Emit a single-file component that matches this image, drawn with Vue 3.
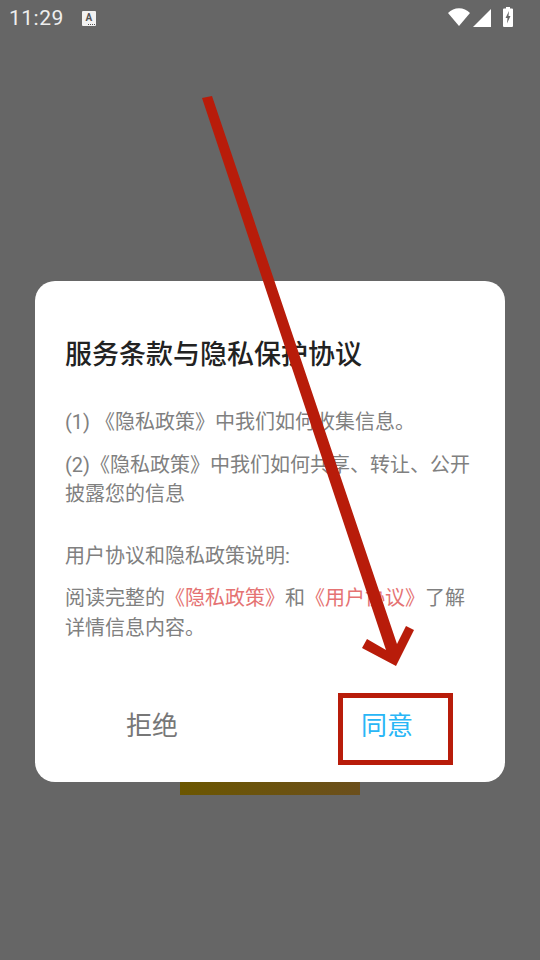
<script setup>
const paragraphs = [
  { text: '(1) 《隐私政策》中我们如何收集信息。', cls: 'p1' },
  { text: '(2)《隐私政策》中我们如何共享、转让、公开披露您的信息', cls: 'p2' },
  { text: '用户协议和隐私政策说明:', cls: 'p3' }
]
</script>

<template>
  <div class="screen">
    <header class="status">
      <span class="time">11:29</span>
      <span class="a-badge">A<i class="dots"></i></span>
      <span class="spacer"></span>
      <svg class="ic-wifi" width="22" height="18" viewBox="0 0 22 18"><path d="M0 5C3 2 6.800 .3 11 .3S19 2 22 5L11 18Z" fill="#fff"/></svg>
      <svg class="ic-signal" width="18" height="18" viewBox="0 0 18 18"><path d="M18 0V18H0Z" fill="#fff"/></svg>
      <svg class="ic-batt" width="10" height="20" viewBox="0 0 10 20"><path d="M3 0H7V1.500H9A1 1 0 0 1 10 2.500V19A1 1 0 0 1 9 20H1A1 1 0 0 1 0 19V2.500A1 1 0 0 1 1 1.500H3Z" fill="#fff"/><path d="M6 4L2.500 11H4.500L4 16.500L7.500 9H5.500Z" fill="#666"/></svg>
    </header>

    <div class="bar"></div>

    <section class="dialog">
      <h1 class="title">服务条款与隐私保护协议</h1>
      <p v-for="p in paragraphs" :key="p.cls" :class="['para', p.cls]">{{ p.text }}</p>
      <p class="para p4">阅读完整的<span class="link">《隐私政策》</span>和<span class="link">《用户协议》</span>了解详情信息内容。</p>
      <div class="actions">
        <button class="btn deny">拒绝</button>
        <button class="btn agree">同意</button>
      </div>
    </section>

    <div class="mark-box"></div>
    <svg class="arrow" width="540" height="960" viewBox="0 0 540 960">
      <polygon points="202,98 212,96 397,644 406,626 414,630 396,666 362,648 367,639 386,650" fill="#b81c0a"/>
    </svg>
  </div>
</template>

<style scoped>
.screen {
  position: relative;
  width: 540px;
  height: 960px;
  overflow: hidden;
  background: #666;
  font-family: Roboto, "Noto Sans CJK SC", sans-serif;
}
.status {
  display: flex;
  align-items: center;
  height: 36px;
  padding: 0 27px 0 9px;
  color: #eee;
}
.time {
  font-size: 21px;
  line-height: 36px;
  letter-spacing: 0.5px;
}
.a-badge {
  position: relative;
  width: 14px;
  height: 15px;
  margin-left: 18px;
  background: #f2f2f2;
  border-radius: 1px;
  color: #555;
  font-size: 10px;
  font-weight: 700;
  line-height: 13px;
  text-align: center;
}
.dots {
  position: absolute;
  right: 1px;
  bottom: 1px;
  width: 7px;
  height: 1px;
  background: repeating-linear-gradient(90deg, #555 0 1px, transparent 1px 2px);
}
.spacer { flex: 1; }
.ic-wifi { margin-top: -2px; }
.ic-signal { margin-left: 3px; }
.ic-batt { margin-left: 12px; margin-top: -2px; }

.bar {
  position: absolute;
  left: 180px;
  top: 700px;
  width: 180px;
  height: 95px;
  background: linear-gradient(90deg, #6b5600, #6b4f1c);
}
.dialog {
  position: relative;
  box-sizing: border-box;
  width: 470px;
  height: 501px;
  margin: 245px 0 0 35px;
  padding: 53px 30px 0 30px;
  background: #fff;
  border-radius: 20px;
  display: flex;
  flex-direction: column;
}
.title {
  margin: 0;
  font-size: 27px;
  font-weight: 500;
  line-height: 42px;
  color: #222;
}
.para {
  margin: 0;
  font-size: 20px;
  line-height: 29.500px;
  color: #808080;
}
.p1 { margin-top: 32px; }
.p2 { margin-top: 13px; }
.p3 { margin-top: 32px; }
.p4 { margin-top: 13px; }
.link { color: #e57373; }
.actions {
  display: flex;
  justify-content: space-between;
  margin-top: 65px;
  padding: 0 62px 0 61px;
}
.btn {
  padding: 0;
  border: 0;
  background: none;
  font-family: inherit;
  font-size: 26px;
  line-height: 36px;
}
.deny { color: #777; }
.agree { color: #29b6f6; }

.mark-box {
  position: absolute;
  left: 338px;
  top: 693px;
  box-sizing: border-box;
  width: 115px;
  height: 72px;
  border: 5px solid #b81c0a;
}
.arrow {
  position: absolute;
  left: 0;
  top: 0;
  pointer-events: none;
}
</style>
